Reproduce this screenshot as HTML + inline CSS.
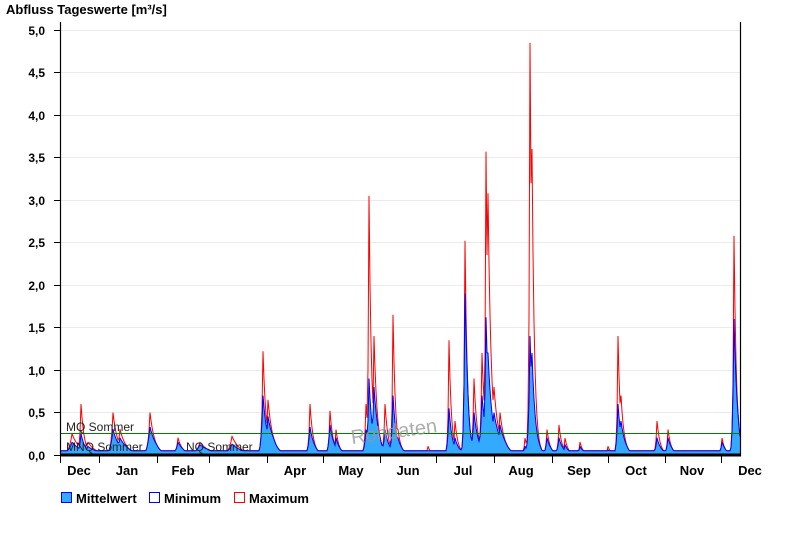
<!DOCTYPE html>
<html><head><meta charset="utf-8"><style>
html,body{margin:0;padding:0;background:#fff;width:800px;height:550px;overflow:hidden}
svg{display:block;font-family:"Liberation Sans",Arial,sans-serif}
</style></head><body>
<svg id="s" width="800" height="550" viewBox="0 0 800 550">
<text x="6" y="14" font-size="13" font-weight="bold">Abfluss Tageswerte [m³/s]</text>
<g stroke="#ebebeb" stroke-width="1">
<line x1="61" x2="740" y1="30.5" y2="30.5"/><line x1="61" x2="740" y1="72.5" y2="72.5"/>
<line x1="61" x2="740" y1="115.5" y2="115.5"/><line x1="61" x2="740" y1="157.5" y2="157.5"/>
<line x1="61" x2="740" y1="200.5" y2="200.5"/><line x1="61" x2="740" y1="242.5" y2="242.5"/>
<line x1="61" x2="740" y1="285.5" y2="285.5"/><line x1="61" x2="740" y1="327.5" y2="327.5"/>
<line x1="61" x2="740" y1="370.5" y2="370.5"/><line x1="61" x2="740" y1="412.5" y2="412.5"/>
</g>
<g font-size="12" font-weight="bold" text-anchor="end">
<text x="45" y="35">5,0</text><text x="45" y="77">4,5</text><text x="45" y="120">4,0</text>
<text x="45" y="162">3,5</text><text x="45" y="205">3,0</text><text x="45" y="247">2,5</text>
<text x="45" y="290">2,0</text><text x="45" y="332">1,5</text><text x="45" y="375">1,0</text>
<text x="45" y="417">0,5</text><text x="45" y="460">0,0</text>
</g>
<g stroke="#000" stroke-width="1">
<line x1="54" x2="60" y1="30.5" y2="30.5"/><line x1="54" x2="60" y1="72.5" y2="72.5"/>
<line x1="54" x2="60" y1="115.5" y2="115.5"/><line x1="54" x2="60" y1="157.5" y2="157.5"/>
<line x1="54" x2="60" y1="200.5" y2="200.5"/><line x1="54" x2="60" y1="242.5" y2="242.5"/>
<line x1="54" x2="60" y1="285.5" y2="285.5"/><line x1="54" x2="60" y1="327.5" y2="327.5"/>
<line x1="54" x2="60" y1="370.5" y2="370.5"/><line x1="54" x2="60" y1="412.5" y2="412.5"/>
<line x1="54" x2="60" y1="455.5" y2="455.5"/>
</g>
<g id="data"></g>
<line x1="61" x2="740" y1="433.5" y2="433.5" stroke="#008000" stroke-width="1"/>
<g font-size="12" fill="#222">
<text x="66" y="431">MQ Sommer</text>
<text x="66" y="451">MNQ Sommer</text>
<text x="186" y="451">NQ Sommer</text>
</g>
<text x="350" y="438" font-size="20" fill="#999" opacity="0.8" transform="rotate(-8 395 428)">Rohdaten</text>
<line x1="60.5" x2="60.5" y1="22" y2="456" stroke="#000" stroke-width="1.2"/>
<line x1="740.5" x2="740.5" y1="22" y2="456" stroke="#000" stroke-width="1.2"/>
<line x1="60" x2="741" y1="455" y2="455" stroke="#000" stroke-width="3"/>
<g stroke="#000" stroke-width="1">
<line x1="60.5" x2="60.5" y1="455" y2="463"/><line x1="99.5" x2="99.5" y1="455" y2="463"/>
<line x1="157.5" x2="157.5" y1="455" y2="463"/><line x1="209.5" x2="209.5" y1="455" y2="463"/>
<line x1="267.5" x2="267.5" y1="455" y2="463"/><line x1="323.5" x2="323.5" y1="455" y2="463"/>
<line x1="380.5" x2="380.5" y1="455" y2="463"/><line x1="436.5" x2="436.5" y1="455" y2="463"/>
<line x1="494.5" x2="494.5" y1="455" y2="463"/><line x1="552.5" x2="552.5" y1="455" y2="463"/>
<line x1="608.5" x2="608.5" y1="455" y2="463"/><line x1="665.5" x2="665.5" y1="455" y2="463"/>
<line x1="721.5" x2="721.5" y1="455" y2="463"/>
</g>
<g font-size="13" font-weight="bold" text-anchor="middle">
<text x="79" y="475">Dec</text><text x="127" y="475">Jan</text><text x="183" y="475">Feb</text>
<text x="238" y="475">Mar</text><text x="295" y="475">Apr</text><text x="351" y="475">May</text>
<text x="408" y="475">Jun</text><text x="463" y="475">Jul</text><text x="521" y="475">Aug</text>
<text x="579" y="475">Sep</text><text x="636" y="475">Oct</text><text x="692" y="475">Nov</text>
<text x="750" y="475">Dec</text>
</g>
<rect x="61.5" y="492.5" width="10" height="10" fill="#33aaff" stroke="#0000ff"/>
<rect x="149.5" y="492.5" width="10" height="10" fill="#fff" stroke="#0000ff"/>
<rect x="234.5" y="492.5" width="10" height="10" fill="#fff" stroke="#ff0000"/>
<g font-size="13" font-weight="bold">
<text x="76" y="503">Mittelwert</text><text x="164" y="503">Minimum</text><text x="249" y="503">Maximum</text>
</g>
</svg>
<script>
(function(){
var P=[[72,.25,.15,5],[81,.6,.25,2],[88,.15,.1,5],[113,.5,.3,3],[120,.3,.2,4],[150,.5,.33,3],[178,.2,.15,3],[200,.15,.12,6],[232,.22,.13,5],[263,1.22,.7,2],[268,.65,.45,3],[310,.6,.33,2],[330,.52,.35,2],[336,.3,.2,2],[366,.6,.3,2],[369,3.05,.9,1.5],[374,1.4,.8,2],[385,.6,.3,2],[393,1.65,.7,1.5],[398,.3,.2,2],[428,.1,.05,2],[449,1.35,.55,1.5],[455,.4,.2,2],[465,2.52,1.9,1.5],[474,.9,.5,2],[482,1.2,.7,2],[486,3.57,1.62,1.5],[488,3.08,1.2,2],[494,.8,.5,3],[500,.5,.35,3],[525,.2,.1,2],[530,4.85,1.4,1.5],[532,3.6,1.2,1.5],[547,.3,.2,2],[559,.35,.2,2],[565,.2,.12,2],[580,.15,.1,2],[608,.1,.06,2],[618,1.4,.6,1.5],[621,.7,.4,2],[657,.4,.2,2],[668,.3,.2,2],[710,.05,.04,5],[722,.2,.15,2],[734,2.58,1.6,1.5],[738,.5,.35,1.5]];
function v(x,k){var s=0.05;for(var i=0;i<P.length;i++){var p=P[i],d=x-p[0],w=p[3]*(k==2?1.4:1);var f=d<0?Math.exp(d/(w*0.6)):Math.exp(-d/(w*1.6));var c=p[k]*f;if(c>s)s=c;}return s;}
var xs=[];for(var x=61;x<=740;x+=1)xs.push(x);P.forEach(function(p){xs.push(p[0]+0.01);});xs.sort(function(a,b){return a-b;});
var mx=[],mn=[],fill=["61,455"];
xs.forEach(function(x){var a=v(x,1),b=v(x,2);if(b>a)b=a;var ya=(455-a*85).toFixed(1),yb=(455-b*85).toFixed(1);mx.push(x.toFixed(2)+","+ya);mn.push(x.toFixed(2)+","+yb);fill.push(x.toFixed(2)+","+yb);});
fill.push("740,455");
var g=document.getElementById("data");
g.innerHTML='<polygon points="'+fill.join(" ")+'" fill="#33aaff"/>'+
'<polyline points="'+mx.join(" ")+'" fill="none" stroke="#ff0000" stroke-width="1"/>'+
'<polyline points="'+mn.join(" ")+'" fill="none" stroke="#0000ff" stroke-width="1"/>';
})();
</script>
</body></html>
